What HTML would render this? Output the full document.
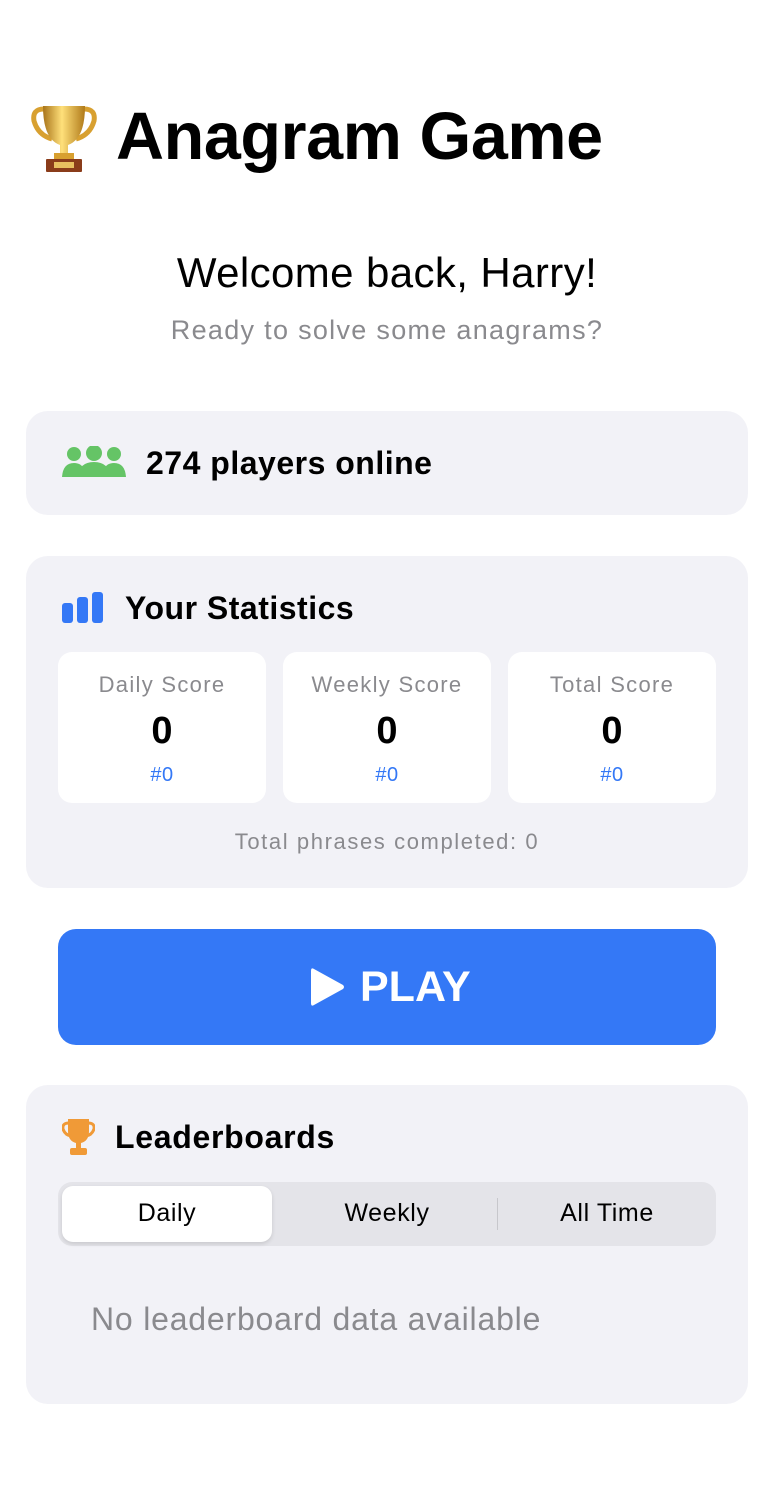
<!DOCTYPE html>
<html><head><meta charset="utf-8"><style>
*{box-sizing:border-box;margin:0;padding:0}
body{width:768px;height:1502px;background:#fff;font-family:"Liberation Sans",sans-serif;color:#000;position:relative;overflow:hidden}
.abs{position:absolute}
.card{position:absolute;left:26px;width:722px;background:#f2f2f7;border-radius:22px}
.stat{position:absolute;top:652px;width:208px;height:151px;background:#fff;border-radius:14px;text-align:center}
.stat .l{position:absolute;top:20px;width:100%;font-size:22px;color:#8a8a8e;letter-spacing:1.3px}
.stat .v{position:absolute;top:58px;width:100%;font-size:38px;font-weight:bold}
.stat .r{position:absolute;top:112px;width:100%;font-size:20px;color:#3478f6;letter-spacing:0.5px}
</style></head><body>
<svg class="abs" style="left:30px;top:103px" width="68" height="70" viewBox="0 0 68 70">
<defs><linearGradient id="g" x1="0" x2="1"><stop offset="0" stop-color="#a8741a"/><stop offset=".45" stop-color="#ffe07a"/><stop offset="1" stop-color="#b07a1a"/></linearGradient></defs>
<path d="M14 6 Q2 6 4 18 Q8 32 22 36" stroke="#d8a030" stroke-width="5" fill="none"/>
<path d="M54 6 Q66 6 64 18 Q60 32 46 36" stroke="#d8a030" stroke-width="5" fill="none"/>
<path d="M13 3 H55 Q55 36 38 42 V52 H30 V42 Q13 36 13 3Z" fill="url(#g)"/>
<rect x="24" y="50" width="20" height="6" fill="#d8a030"/>
<rect x="16" y="56" width="36" height="13" rx="1" fill="#8a3c1a"/>
<rect x="24" y="59" width="20" height="6" fill="#e8c060"/>
</svg>
<div class="abs" style="left:116px;top:99px;font-size:66.5px;font-weight:bold;letter-spacing:-0.4px">Anagram Game</div>
<div class="abs" style="left:0;width:774px;top:249px;text-align:center;font-size:42px;letter-spacing:0.4px">Welcome back, Harry!</div>
<div class="abs" style="left:0;width:774px;top:315px;text-align:center;font-size:27px;color:#8a8a8e;letter-spacing:1.3px">Ready to solve some anagrams?</div>

<div class="card" style="top:411px;height:104px"></div>
<svg class="abs" style="left:62px;top:446px" width="64" height="32" viewBox="0 0 64 32">
<g fill="#65c466"><circle cx="12" cy="8" r="7"/><circle cx="52" cy="8" r="7"/><circle cx="32" cy="7" r="8"/>
<path d="M0 31 Q1 17 12 17 Q20 17 22 24 L22 31Z"/><path d="M64 31 Q63 17 52 17 Q44 17 42 24 L42 31Z"/>
<path d="M16 31 Q17 16 32 16 Q47 16 48 31Z"/></g></svg>
<div class="abs" style="left:146px;top:445px;font-size:32px;font-weight:bold;letter-spacing:0.5px">274 players online</div>

<div class="card" style="top:556px;height:332px"></div>
<svg class="abs" style="left:62px;top:592px" width="42" height="32" viewBox="0 0 42 32">
<g fill="#3478f6"><rect x="0" y="11" width="11" height="20" rx="3"/><rect x="15" y="5" width="11" height="26" rx="3"/><rect x="30" y="0" width="11" height="31" rx="3"/></g></svg>
<div class="abs" style="left:125px;top:590px;font-size:32px;font-weight:bold;letter-spacing:0.5px">Your Statistics</div>
<div class="stat" style="left:58px"><div class="l">Daily Score</div><div class="v">0</div><div class="r">#0</div></div>
<div class="stat" style="left:283px"><div class="l">Weekly Score</div><div class="v">0</div><div class="r">#0</div></div>
<div class="stat" style="left:508px"><div class="l">Total Score</div><div class="v">0</div><div class="r">#0</div></div>
<div class="abs" style="left:0;width:774px;top:829px;text-align:center;font-size:22px;color:#8a8a8e;letter-spacing:1.6px">Total phrases completed: 0</div>

<div class="abs" style="left:58px;top:929px;width:658px;height:116px;background:#3478f6;border-radius:18px"></div>
<svg class="abs" style="left:311px;top:967px" width="34" height="40" viewBox="0 0 34 40"><path d="M3 2 Q0 0 0 4 V36 Q0 40 3 38 L32 22 Q34 20 32 18Z" fill="#fff"/></svg>
<div class="abs" style="left:360px;top:963px;font-size:43px;font-weight:bold;color:#fff">PLAY</div>

<div class="card" style="top:1085px;height:319px"></div>
<svg class="abs" style="left:62px;top:1119px" width="33" height="37" viewBox="0 0 33 37">
<g fill="#f09a37"><path d="M6 0 H27 V12 Q27 22 19 24 V29 H14 V24 Q6 22 6 12Z"/>
<path d="M7 4 Q0 4 1 10 Q3 16 9 17" stroke="#f09a37" stroke-width="3" fill="none"/>
<path d="M26 4 Q33 4 32 10 Q30 16 24 17" stroke="#f09a37" stroke-width="3" fill="none"/>
<rect x="8" y="29" width="17" height="7" rx="2"/></g></svg>
<div class="abs" style="left:115px;top:1119px;font-size:32px;font-weight:bold;letter-spacing:0.7px">Leaderboards</div>
<div class="abs" style="left:58px;top:1182px;width:658px;height:64px;background:#e4e4e9;border-radius:14px"></div>
<div class="abs" style="left:62px;top:1186px;width:210px;height:56px;background:#fff;border-radius:11px;box-shadow:0 2px 4px rgba(0,0,0,.12)"></div>
<div class="abs" style="left:497px;top:1198px;width:1px;height:32px;background:#c7c7cc"></div>
<div class="abs" style="left:62px;width:210px;top:1199px;text-align:center;font-size:25px;letter-spacing:0.6px">Daily</div>
<div class="abs" style="left:282px;width:210px;top:1199px;text-align:center;font-size:25px;letter-spacing:0.6px">Weekly</div>
<div class="abs" style="left:502px;width:210px;top:1199px;text-align:center;font-size:25px;letter-spacing:0.6px">All Time</div>
<div class="abs" style="left:91px;top:1301px;font-size:32px;color:#8a8a8e;letter-spacing:0.8px">No leaderboard data available</div>
</body></html>
